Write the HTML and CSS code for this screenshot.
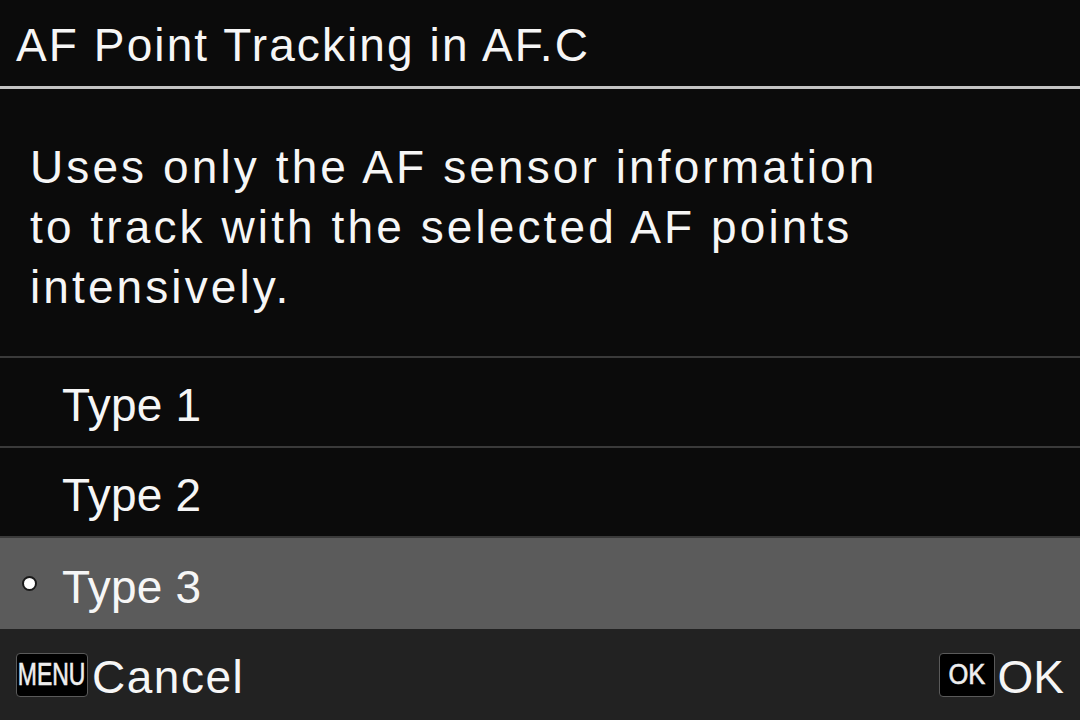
FILE: index.html
```html
<!DOCTYPE html>
<html>
<head>
<meta charset="utf-8">
<link rel="stylesheet" href="styles.css">
</head>
<body>
<div class="screen">
  <div class="header"><span class="title">AF Point Tracking in AF.C</span></div>
  <div class="desc">
    <div class="line">Uses only the AF sensor information</div>
    <div class="line">to track with the selected AF points</div>
    <div class="line">intensively.</div>
  </div>
  <div class="list">
    <div class="row"><span class="label">Type 1</span></div>
    <div class="row"><span class="label">Type 2</span></div>
    <div class="row selected"><span class="bullet"></span><span class="label">Type 3</span></div>
  </div>
  <div class="footer">
    <div class="action"><span class="key key-menu"><span class="key-text">MENU</span></span><span class="action-label">Cancel</span></div>
    <div class="action"><span class="key key-ok"><span class="key-text">OK</span></span><span class="action-label ok-label">OK</span></div>
  </div>
</div>
</body>
</html>
```
FILE: styles.css
```css
html, body {
  margin: 0;
  padding: 0;
  background: #0b0b0b;
}
.screen {
  width: 1080px;
  height: 720px;
  display: flex;
  flex-direction: column;
  background: #0b0b0b;
  color: #f6f6f6;
  font-family: "Liberation Sans", Arial, sans-serif;
  overflow: hidden;
}
.header {
  box-sizing: border-box;
  border-bottom: 3px solid #c4c4c4;
  padding-left: 16px;
  display: flex;
  align-items: flex-end;
  flex: none;
  height: 89px;
}
.title {
  font-size: 46px;
  letter-spacing: 2.1px;
  line-height: 52px;
  padding-bottom: 15px;
}
.desc {
  height: 269px;
  box-sizing: border-box;
  padding: 48px 0 0 30px;
  border-bottom: 2px solid #3a3a3a;
  flex: none;
}
.line {
  font-size: 46px;
  line-height: 60px;
  letter-spacing: 3.1px;
}
.list {
  display: flex;
  flex-direction: column;
  flex: none;
}
.row {
  height: 90px;
  box-sizing: border-box;
  border-bottom: 2px solid #3a3a3a;
  display: flex;
  align-items: center;
  padding-left: 62px;
  position: relative;
}
.row.selected {
  background: #5b5b5b;
  border-bottom: none;
  height: 91px;
}
.label {
  font-size: 46px;
  letter-spacing: 0.2px;
  padding-top: 6px;
}
.bullet {
  position: absolute;
  left: 22px;
  top: 38px;
  width: 11px;
  height: 11px;
  border-radius: 50%;
  background: #ffffff;
  border: 2px solid #1a1a1a;
}
.footer {
  flex: 1;
  background: #222222;
  display: flex;
  justify-content: space-between;
  align-items: center;
  padding: 0 16px 0 16px;
}
.action {
  display: flex;
  align-items: center;
}
.key {
  box-sizing: border-box;
  height: 44px;
  background: #000;
  border: 1px solid #5a5a5a;
  border-radius: 4px;
  display: flex;
  align-items: center;
  justify-content: center;
  overflow: hidden;
}
.key-menu {
  width: 72px;
}
.key-ok {
  width: 56px;
}
.key-text {
  font-size: 31px;
  font-weight: normal;
  display: inline-block;
  transform: scaleX(0.74);
  color: #eeeeee;
  -webkit-text-stroke: 0.6px #eeeeee;
}
.key-ok .key-text {
  transform: scaleX(0.88);
  font-size: 29px;
}
.action-label {
  font-size: 46px;
  letter-spacing: 1.5px;
  margin-left: 4px;
  padding-top: 4px;
}
.ok-label {
  letter-spacing: 0;
  margin-left: 3px;
}
```
